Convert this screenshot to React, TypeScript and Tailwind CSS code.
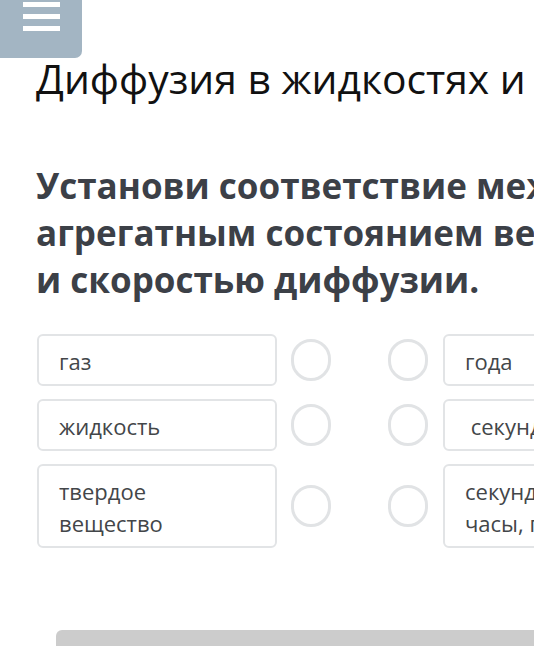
import React from "react";

const rows = [
  { left: "газ", right: "года" },
  { left: "жидкость", right: "\u00a0секунды, минуты" },
  { left: "твердое вещество", right: "секунды, минуты, часы, годы" },
];

function Circle() {
  return (
    <div className="flex w-[40px] shrink-0 items-center justify-center">
      <div className="h-[42px] w-[42px] rounded-full border-[3px] border-[#e1e3e5] bg-white" />
    </div>
  );
}

export default function App() {
  return (
    <div
      className="relative h-[646px] w-[534px] overflow-hidden bg-white"
      style={{ fontFamily: "'Open Sans', 'Noto Sans', sans-serif" }}
    >
      <div className="flex h-[58px] w-[82px] flex-col items-center gap-[7px] rounded-br-[7px] bg-[#a3b5c3] pt-[2px]">
        <div className="h-[5px] w-[37px] bg-white" />
        <div className="h-[5px] w-[37px] bg-white" />
        <div className="h-[5px] w-[37px] bg-white" />
      </div>
      <div className="w-[900px] pl-[36px]">
        <h1 className="-mt-[4px] whitespace-nowrap text-[40.8px] leading-[48px] text-[#111111]">
          Диффузия в жидкостях и газах
        </h1>
        <h2 className="mt-[60px] whitespace-nowrap text-[35px] font-bold leading-[47px] text-[#3c4047]">
          Установи соответствие между
          <br />
          агрегатным состоянием вещества
          <br />
          и скоростью диффузии.
        </h2>
        <div className="mt-[31px] flex flex-col gap-[13px] pl-[1px]">
          {rows.map((r, i) => (
            <div key={i} className="flex items-stretch">
              <div className="w-[240px] rounded-[6px] border-2 border-[#e2e4e6] px-[20px] pb-[7px] pt-[9px] text-[22px] leading-[32px] text-[#434649]">
                {r.left}
              </div>
              <div className="ml-[14px] flex items-center">
                <Circle />
              </div>
              <div className="ml-[57px] flex items-center">
                <Circle />
              </div>
              <div className="ml-[15px] w-[240px] rounded-[6px] border-2 border-[#e2e4e6] px-[20px] pb-[7px] pt-[9px] text-[22px] leading-[32px] text-[#434649]">
                {r.right}
              </div>
            </div>
          ))}
        </div>
      </div>
      <div className="absolute left-[56px] top-[630px] h-[30px] w-[600px] rounded-tl-[6px] bg-[#cccccc]" />
    </div>
  );
}
